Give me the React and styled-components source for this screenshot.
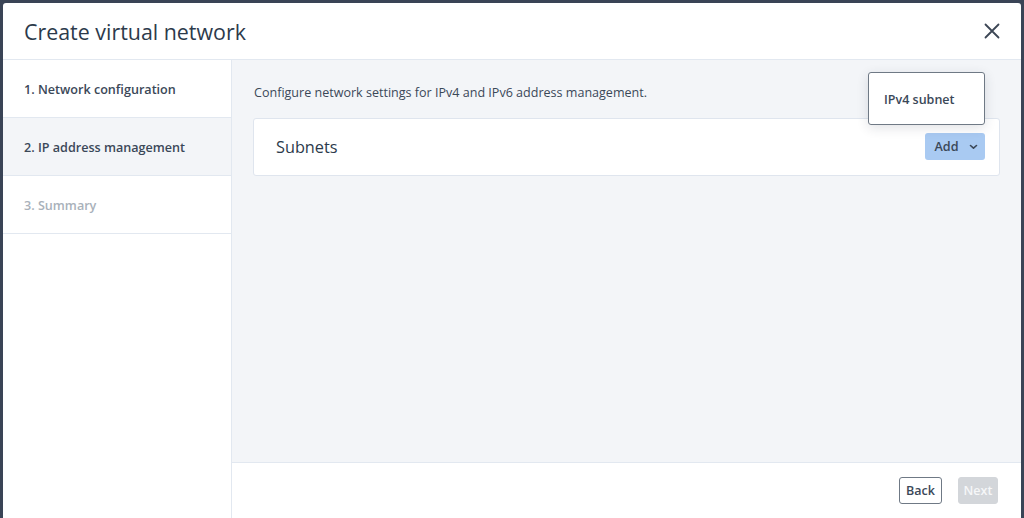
import React from "react";
import styled, { createGlobalStyle } from "styled-components";

const Global = createGlobalStyle`
  html, body { margin: 0; padding: 0; background: #3a4456; }
  body { font-family: "Open Sans", "Noto Sans", sans-serif; -webkit-font-smoothing: antialiased; }
  * { box-sizing: border-box; }
`;

const Overlay = styled.div`
  width: 1024px;
  height: 518px;
  padding: 3px 3px 0 3px;
  overflow: hidden;
`;

const Dialog = styled.div`
  height: 515px;
  background: #fff;
  border-radius: 3px 3px 0 0;
  display: flex;
  flex-direction: column;
`;

const Header = styled.div`
  height: 57px;
  flex: none;
  border-bottom: 1px solid #e2e8f0;
  display: flex;
  align-items: center;
  justify-content: space-between;
  padding: 0 20px 0 21px;
`;

const Title = styled.h1`
  margin: 0;
  font-size: 21.4px;
  font-weight: 400;
  color: #2c3a4b;
`;

const CloseButton = styled.button`
  border: none;
  background: none;
  padding: 0;
  width: 18px;
  height: 18px;
  display: flex;
  align-items: center;
  justify-content: center;
  cursor: pointer;
`;

const Body = styled.div`
  flex: 1;
  display: flex;
  min-height: 0;
`;

const Nav = styled.nav`
  width: 229px;
  flex: none;
  border-right: 1px solid #e2e8f0;
  display: flex;
  flex-direction: column;
`;

const NavItem = styled.div`
  height: 58px;
  border-bottom: 1px solid #e2e8f0;
  display: flex;
  align-items: center;
  padding: 2px 0 0 21px;
  font-size: 12.6px;
  font-weight: 600;
  color: ${(p) => (p.$disabled ? "#a9b1ba" : "#3b4858")};
  background: ${(p) => (p.$active ? "#f3f5f8" : "#fff")};
`;

const Main = styled.div`
  flex: 1;
  display: flex;
  flex-direction: column;
  background: #f3f5f8;
`;

const Content = styled.div`
  flex: 1;
  padding: 24px 21px 0 21px;
`;

const Description = styled.p`
  margin: 0 0 16px 1px;
  font-size: 12.55px;
  line-height: 18px;
  color: #3b4858;
`;

const Card = styled.div`
  height: 58px;
  background: #fff;
  border: 1px solid #dfe5ee;
  border-radius: 3px;
  display: flex;
  align-items: center;
  justify-content: space-between;
  padding: 0 14px 1px 22px;
`;

const CardTitle = styled.h2`
  margin: 0;
  font-size: 16.3px;
  font-weight: 400;
  color: #2c3a4b;
`;

const DropdownWrap = styled.div`
  position: relative;
`;

const AddButton = styled.button`
  height: 27px;
  width: 60px;
  border: none;
  border-radius: 3px;
  background: #a9caf2;
  color: #3b4858;
  font-family: inherit;
  font-size: 12.6px;
  font-weight: 600;
  display: flex;
  align-items: center;
  justify-content: center;
  gap: 10px;
  padding: 0 0 0 2px;
`;

const Menu = styled.div`
  position: absolute;
  right: 0;
  bottom: calc(100% + 8px);
  width: 117px;
  height: 53px;
  background: #fff;
  border: 1px solid #6f7985;
  border-radius: 3px;
  box-shadow: 0 3px 12px rgba(40, 50, 70, 0.14);
  display: flex;
  align-items: center;
  padding: 2px 0 0 15px;
`;

const MenuItem = styled.div`
  font-size: 12.5px;
  font-weight: 600;
  color: #3b4858;
`;

const Footer = styled.div`
  height: 56px;
  flex: none;
  background: #fff;
  border-top: 1px solid #e2e8f0;
  display: flex;
  align-items: center;
  justify-content: flex-end;
  gap: 16px;
  padding: 0 23px 1px 0;
`;

const FooterButton = styled.button`
  height: 27px;
  width: ${(p) => (p.$primary ? "40px" : "43px")};
  padding: 0;
  border-radius: 3px;
  font-family: inherit;
  font-size: 12.5px;
  font-weight: 600;
  border: 1px solid ${(p) => (p.$primary ? "#d3d6da" : "#6f7985")};
  background: ${(p) => (p.$primary ? "#d3d6da" : "#fff")};
  color: ${(p) => (p.$primary ? "#f6f7f8" : "#3b4858")};
`;

const XIcon = () => (
  <svg width="16" height="16" viewBox="0 0 16 16">
    <path d="M1.5 1.5 L14.5 14.5 M14.5 1.5 L1.5 14.5" stroke="#3c4655" strokeWidth="1.8" strokeLinecap="round" fill="none" />
  </svg>
);

const Chevron = () => (
  <svg width="9" height="6" viewBox="0 0 9 6">
    <path d="M1.5 1.5 L4.5 4.2 L7.5 1.5" stroke="#3b4858" strokeWidth="1.6" strokeLinecap="round" strokeLinejoin="round" fill="none" />
  </svg>
);

export default function App() {
  return (
    <>
      <Global />
      <Overlay>
        <Dialog>
          <Header>
            <Title>Create virtual network</Title>
            <CloseButton aria-label="Close">
              <XIcon />
            </CloseButton>
          </Header>
          <Body>
            <Nav>
              <NavItem>1. Network configuration</NavItem>
              <NavItem $active>2. IP address management</NavItem>
              <NavItem $disabled>3. Summary</NavItem>
            </Nav>
            <Main>
              <Content>
                <Description>Configure network settings for IPv4 and IPv6 address management.</Description>
                <Card>
                  <CardTitle>Subnets</CardTitle>
                  <DropdownWrap>
                    <AddButton>
                      Add <Chevron />
                    </AddButton>
                    <Menu>
                      <MenuItem>IPv4 subnet</MenuItem>
                    </Menu>
                  </DropdownWrap>
                </Card>
              </Content>
              <Footer>
                <FooterButton>Back</FooterButton>
                <FooterButton $primary>Next</FooterButton>
              </Footer>
            </Main>
          </Body>
        </Dialog>
      </Overlay>
    </>
  );
}
